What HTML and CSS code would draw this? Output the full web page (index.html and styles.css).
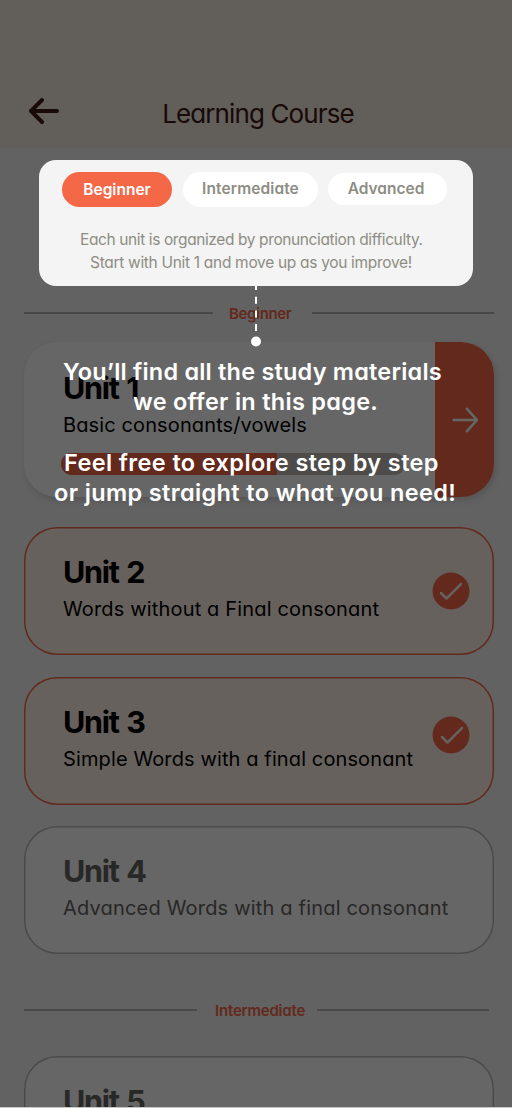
FILE: index.html
```html
<!DOCTYPE html>
<html lang="en">
<head>
<meta charset="utf-8">
<title>Learning Course</title>
<link rel="stylesheet" href="styles.css">
</head>
<body>
<div class="screen">
  <header class="header">
    <svg class="back" width="32" height="28" viewBox="0 0 32 28"><path d="M14 3 3 14l11 11M3.500 14H29" /></svg>
    <h1 class="title">Learning Course</h1>
  </header>
  <main class="course">
    <div class="divider first"><i></i><span class="level level-b">Beginner</span><i></i></div>
    <section class="card active">
      <div class="body">
        <h2>Unit 1</h2>
        <p class="s1">Basic consonants/vowels</p>
        <div class="progress"><div class="fill"></div></div>
      </div>
      <div class="go"><svg width="26" height="26" viewBox="0 0 26 26"><path d="M1.500 13H25M15 1.800 25 13 15 24.200" /></svg></div>
    </section>
    <section class="card done">
      <div class="body"><h2>Unit 2</h2><p class="s2">Words without a Final consonant</p></div>
      <svg class="check" width="38" height="38" viewBox="0 0 38 38"><circle cx="19" cy="19" r="18.500"/><path d="m9 21 5.500 5.500L29 12"/></svg>
    </section>
    <section class="card done raised">
      <div class="body"><h2>Unit 3</h2><p class="s3">Simple Words with a final consonant</p></div>
      <svg class="check" width="38" height="38" viewBox="0 0 38 38"><circle cx="19" cy="19" r="18.500"/><path d="m10 21 5.500 5.500L30 12"/></svg>
    </section>
    <section class="card locked">
      <div class="body"><h2>Unit 4</h2><p class="s4">Advanced Words with a final consonant</p></div>
    </section>
    <div class="divider second"><i></i><span class="level level-i">Intermediate</span><i></i></div>
    <section class="card locked">
      <div class="body"><h2>Unit 5</h2></div>
    </section>
  </main>
  <div class="overlay">
    <div class="guide">
      <nav class="tabs">
        <span class="tab on">Beginner</span>
        <span class="tab mid">Intermediate</span>
        <span class="tab adv">Advanced</span>
      </nav>
      <p class="note n1">Each unit is organized by pronunciation difficulty.</p>
      <p class="note n2">Start with Unit 1 and move up as you improve!</p>
    </div>
    <svg class="pointer" width="12" height="62" viewBox="0 0 12 62"><path d="M6 0V52" stroke-dasharray="7 6.700" stroke-dashoffset="3"/><circle cx="6" cy="55.500" r="5"/></svg>
    <div class="message">
      <p class="m1">You’ll find all the study materials</p>
      <p class="m2">we offer in this page.</p>
      <p class="m3">Feel free to explore step by step</p>
      <p class="m4">or jump straight to what you need!</p>
    </div>
  </div>
</div>
</body>
</html>
```
FILE: styles.css
```css
* { box-sizing: border-box; }
body { margin: 0; }
h1, h2, p { margin: 0; white-space: nowrap; }
svg { display: block; flex: none; }
.screen {
  position: relative;
  height: 1108px;
  overflow: hidden;
  background: #f4f4f4;
  font-family: Inter, "Liberation Sans", sans-serif;
  font-feature-settings: "cv11";
}
.header {
  height: 148px;
  padding: 97px 28px 0;
  display: grid;
  grid-template-columns: 32px 1fr 28px;
  background: #f5ebe1;
  color: #3a1a12;
}
.back { fill: none; stroke: #3a1a12; stroke-width: 4; stroke-linecap: round; stroke-linejoin: round; }
.title { font-size: 26px; line-height: 33px; font-weight: 400; text-align: center; letter-spacing: -.88px; }
.course { padding: 0 18px 0 24px; }
.divider { display: grid; grid-template-rows: 20px; align-items: center; height: 20px; }
.divider i { height: 2px; background: #b5b5b1; }
.divider.first { grid-template-columns: 189px 99px 182px; margin-top: 155px; margin-bottom: 19px; }
.divider.second { grid-template-columns: 173px 120px 172px; margin: 46px 0 36px; }
.level { padding-top: 1px; color: #f46848; font-size: 15px; font-weight: 600; line-height: 20px; letter-spacing: -.36px; white-space: nowrap; }
.level-b { padding-left: 16px; }
.level-i { padding-left: 18px; letter-spacing: -.2px; }
.card {
  display: flex;
  height: 128px;
  margin-bottom: 21.700px;
  padding: 1px;
  box-shadow: inset 0 0 0 1.500px #b9b9b5;
  border-radius: 33px;
  background: #fff;
  overflow: hidden;
}
.body { flex: 1; padding: 26px 0 0 38px; }
h2 { font-size: 30.500px; line-height: 36px; font-weight: 700; letter-spacing: -1.250px; word-spacing: 1.500px; }
.body p { font-size: 20px; line-height: 28px; margin-top: 5px; }
.body .s1 { letter-spacing: .12px; }
.body .s2 { letter-spacing: .16px; }
.body .s3 { letter-spacing: .12px; }
.body .s4 { letter-spacing: .19px; }
.active { height: 155px; margin-bottom: 30px; padding: 0; box-shadow: 2px 3px 6px rgba(0,0,0,.14); }
.active .body { padding: 28px 0 0 39px; }
.progress { width: 344px; height: 22px; margin: 14px 0 0 -2px; border-radius: 11px; background: #c0bfba; overflow: hidden; }
.fill { width: 216px; height: 22px; background: #f46848; }
.go { width: 59px; display: flex; align-items: center; justify-content: center; background: #f46848; }
.go svg { fill: none; stroke: #fff; stroke-width: 2.500; stroke-linecap: round; stroke-linejoin: round; }
.done { background: #fff2e6; box-shadow: inset 0 0 0 1.500px #f46848; }
.check { margin: 44px 23px 0 0; fill: #f46848; }
.check path { fill: none; stroke: #fff2e6; stroke-width: 2.500; stroke-linecap: round; stroke-linejoin: round; }
.raised .check { margin-top: 38px; }
.locked { color: #65655f; }
.overlay {
  position: absolute;
  inset: 0;
  padding-top: 160px;
  display: flex;
  flex-direction: column;
  align-items: center;
  background: rgba(0,0,0,.6);
  border-bottom: 1px solid #c9c5c4;
}
.guide { width: 434px; height: 126px; padding: 11px 23px; border-radius: 17px; background: #f4f4f4; color: #8d8d83; }
.tabs { display: flex; align-items: center; height: 36px; }
.tab { display: block; border-radius: 18px; background: #fff; text-align: center; font-weight: 600; font-size: 15.500px; white-space: nowrap; }
.on { width: 110px; height: 35px; line-height: 36px; margin-right: 11px; background: #f46848; color: #fff; }
.mid { width: 135px; height: 35px; line-height: 34px; margin-right: 10px; letter-spacing: .1px; }
.adv { width: 119px; height: 32px; line-height: 31px; padding-right: 3px; }
.note { font-size: 15.500px; line-height: 23px; }
.n1 { margin: 21px 0 0 18px; letter-spacing: -.39px; }
.n2 { margin-left: 28px; letter-spacing: -.31px; }
.pointer { fill: #fff; stroke: #fff; stroke-width: 2; }
.pointer circle { stroke: none; }
.message { width: 512px; margin-top: 9px; color: #fff; font-size: 23.500px; line-height: 30px; font-weight: 600; }
.m1 { padding-left: 63px; letter-spacing: .2px; }
.m2 { padding-left: 133px; letter-spacing: .28px; }
.m3 { padding-left: 64px; margin-top: 31px; letter-spacing: .38px; }
.m4 { padding-left: 54px; letter-spacing: .37px; }
```
